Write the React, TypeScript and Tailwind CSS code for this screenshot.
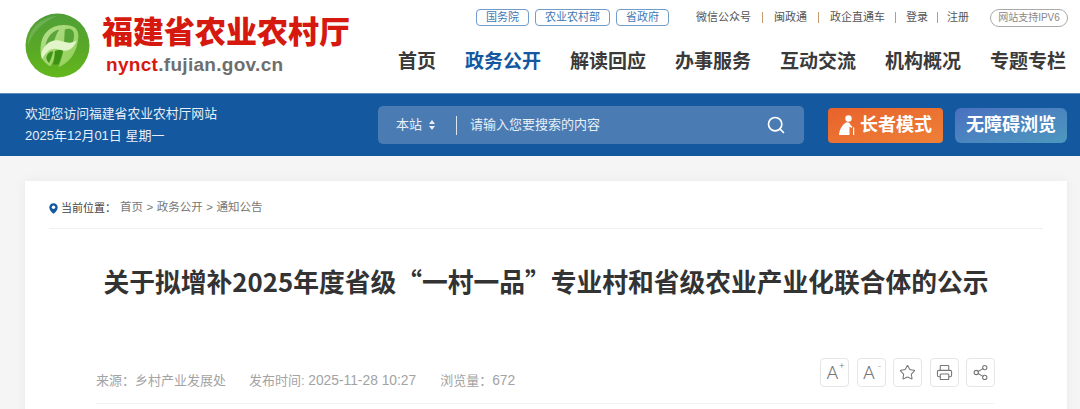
import { Search, Star, Printer, Share2 } from "lucide-react";

const font = { fontFamily: '"Liberation Sans", "Noto Sans CJK SC", sans-serif' };

function Logo() {
  return (
    <svg width="65" height="65" viewBox="0 0 66 66" className="shrink-0">
      <defs>
        <linearGradient id="lg" x1="0" y1="0" x2="0" y2="1">
          <stop offset="0" stopColor="#4f9f38" />
          <stop offset="0.55" stopColor="#5aa827" />
          <stop offset="1" stopColor="#63b81a" />
        </linearGradient>
        <linearGradient id="band" x1="0" y1="0" x2="1" y2="1">
          <stop offset="0" stopColor="#b5de90" />
          <stop offset="1" stopColor="#8fd052" />
        </linearGradient>
      </defs>
      <circle cx="33" cy="33" r="32.5" fill="url(#lg)" />
      <g transform="translate(4 4) scale(0.88)">
        <path d="M14 45C11 25 20 11 37 9.5C50 8.5 57.5 12 57 23C56 41 47 53 34 58C37 50 39 44 40 37L30 39C30 46 28 52 25 57C19 54 16 50 14 45Z" fill="url(#band)" />
        <path d="M19 37C19 26 25 17 35 14.5C32 19 30 24 29 29C25 30 22 33 19 37Z" fill="#5ba53a" />
        <path d="M41.5 14.5C47 12.5 52.5 14 52 22C51.8 26 51 29 49.5 31.5C46.5 32 44 31.5 40.5 29.5C41 24 41 19 41.5 14.5Z" fill="#58a335" />
        <path d="M20 47C21 42 24 40 28 39.5C27 45 25 49 23.5 53C22 52 20.5 50 20 47Z" fill="#3f9514" />
        <path d="M30 39.5L39.5 37C38.5 44 36.5 49 34 54.5C32 55 30 55 28 54.5C29.5 49 30 44 30 39.5Z" fill="#3c9012" />
        <path d="M14 43C17 31 27 25 36 27.5C43 29.5 49 31.5 55 27C52 37 44 41 36 38C28 35 21 37 15 49Z" fill="#e2f5c8" />
      </g>
      <path d="M3 33C3 16 16 4 33 3C20 8 8 18 3 33Z" fill="#ffffff" opacity="0.15" />
    </svg>
  );
}

function Elder() {
  return (
    <svg width="17" height="20" viewBox="0 0 17 20" fill="#fff" className="shrink-0">
      <circle cx="9.5" cy="3.5" r="3.2" />
      <path d="M7 7.5c2.5-.6 4 .6 4.5 2.2l2 2.3-1 1-2-1.6V20H0c.2-5 3-10 7-12.5Z" />
      <path d="M14 12.5h1.2V20H14z" />
    </svg>
  );
}

function Pin() {
  return (
    <svg width="9" height="11" viewBox="0 0 9 11" className="shrink-0">
      <path d="M4.5 0.3C2 0.3 0.3 2.1 0.3 4.4 0.3 7 3 9.4 4.5 10.7 6 9.4 8.7 7 8.7 4.4 8.7 2.1 7 0.3 4.5 0.3Z" fill="#14589f" />
      <circle cx="4.5" cy="4.3" r="1.7" fill="#fff" />
    </svg>
  );
}

function Pill({ children }: { children: string }) {
  return (
    <span className="h-[17px] px-[9px] flex items-center rounded-[4px] border border-[#6f9ccb] text-[11px] text-[#3f78b4] leading-none">
      {children}
    </span>
  );
}

function IconBox({ children }: { children: React.ReactNode }) {
  return (
    <span className="w-[29px] h-[29px] flex items-center justify-center rounded-[4px] border border-[#e6e6e6] text-[#777] leading-none">
      {children}
    </span>
  );
}

function FontA({ mark }: { mark: string }) {
  return (
    <span className="relative pr-[4px] font-['Roboto'] font-light text-[19px] leading-none">
      A
      <span className="absolute right-[-2px] top-[-1px] text-[9px] leading-none">{mark}</span>
    </span>
  );
}

export default function App() {
  return (
    <div style={font} className="w-[1080px] h-[409px] overflow-hidden bg-[#f5f5f5]">
      <header className="h-[93px] bg-white flex pl-[25px] pr-[12px]">
        <div className="flex items-start pt-[13px]">
          <Logo />
          <div className="ml-[12px] pt-[1px]">
            <div className="text-[31px] leading-[38px] font-black text-[#d6190e] whitespace-nowrap">福建省农业农村厅</div>
            <div className="ml-[4px] mt-[1px] text-[19px] leading-[24px] font-bold tracking-[0.3px] text-[#6e6e6e] whitespace-nowrap">
              <span className="text-[#d6190e]">nynct</span>.fujian.gov.cn
            </div>
          </div>
        </div>
        <div className="flex-1 flex flex-col items-end">
          <div className="flex items-center pt-[8px] h-[27px]">
            <div className="flex items-center gap-[6px]">
              <Pill>国务院</Pill>
              <Pill>农业农村部</Pill>
              <Pill>省政府</Pill>
            </div>
            <div className="ml-[27px] flex items-center text-[11px] text-[#555] whitespace-nowrap">
              <span>微信公众号</span>
              <span className="mx-[11px] w-px h-[11px] bg-[#c49a6c]" />
              <span>闽政通</span>
              <span className="mx-[11px] w-px h-[11px] bg-[#c49a6c]" />
              <span>政企直通车</span>
              <span className="mx-[10px] w-px h-[11px] bg-[#c49a6c]" />
              <span>登录</span>
              <span className="mx-[9px] w-px h-[11px] bg-[#c49a6c]" />
              <span>注册</span>
            </div>
            <span className="ml-[21px] h-[18px] w-[78px] flex items-center justify-center rounded-full border border-[#aaa] text-[10px] text-[#888] whitespace-nowrap">网站支持IPV6</span>
          </div>
          <nav className="mt-[23px] mr-[2px] flex gap-[29px] text-[19px] leading-[24px] font-bold text-[#3a3a3a] whitespace-nowrap">
            <span>首页</span>
            <span className="text-[#14589f]">政务公开</span>
            <span>解读回应</span>
            <span>办事服务</span>
            <span>互动交流</span>
            <span>机构概况</span>
            <span>专题专栏</span>
          </nav>
        </div>
      </header>

      <div className="h-[63px] bg-[#14589f] border-t border-[#5b8bc0] flex items-center pl-[25px] pr-[13px] text-white">
        <div className="w-[353px] text-[12.8px] leading-[22px] text-[#e8eff7] whitespace-nowrap">
          <div>欢迎您访问福建省农业农村厅网站</div>
          <div className="text-[13px]">2025年12月01日 星期一</div>
        </div>
        <div className="w-[426px] h-[38px] rounded-[5px] bg-[#4a7cb3] flex items-center pl-[18px] pr-[18px] text-[13px] text-[#e8eff7]">
          <span>本站</span>
          <span className="ml-[7px] flex flex-col gap-[2px]">
            <span className="w-0 h-0 border-x-[3px] border-x-transparent border-b-[4px] border-b-[#e8eff7]" />
            <span className="w-0 h-0 border-x-[3px] border-x-transparent border-t-[4px] border-t-[#e8eff7]" />
          </span>
          <span className="ml-[21px] w-px h-[19px] bg-[#dbe6f2]" />
          <span className="ml-[13px] flex-1">请输入您要搜索的内容</span>
          <Search size={20} strokeWidth={2} className="text-white" />
        </div>
        <div className="ml-[24px] w-[115px] h-[35px] rounded-[4px] bg-gradient-to-br from-[#e8622c] to-[#ee8038] flex items-center justify-center gap-[4px] text-[18px] font-bold whitespace-nowrap">
          <Elder />
          <span>长者模式</span>
        </div>
        <div className="ml-[12px] w-[112px] h-[35px] rounded-[6px] bg-gradient-to-br from-[#4a70c0] to-[#4d98be] flex items-center justify-center text-[18px] font-bold whitespace-nowrap">
          无障碍浏览
        </div>
      </div>

      <main className="mt-[25px] ml-[25px] mr-[13px] h-[300px] bg-white shadow-[0_0_12px_rgba(0,0,0,0.05)] px-[24px]">
        <div className="h-[48px] border-b border-[#f0f0f0] flex items-center pt-[7px] text-[11.5px] text-[#777] whitespace-nowrap">
          <Pin />
          <span className="ml-[3px] text-[#444] text-[11px]">当前位置：</span>
          <span className="ml-[4px]">首页</span>
          <span className="mx-[3.5px]">&gt;</span>
          <span>政务公开</span>
          <span className="mx-[3.5px]">&gt;</span>
          <span>通知公告</span>
        </div>
        <h1 className="mt-[34px] text-center font-['Noto_Sans_CJK_SC'] text-[25.75px] leading-[36px] font-bold text-[#333] whitespace-nowrap">
          关于拟增补2025年度省级“一村一品”专业村和省级农业产业化联合体的公示
        </h1>
        <div className="mt-[59px] ml-[47px] mr-[48px] h-[46px] border-b border-[#f3f3f3] flex items-start justify-between">
          <div className="pt-[11px] flex text-[13px] leading-[24px] text-[#a3a3a3] whitespace-nowrap">
            <span>来源：乡村产业发展处</span>
            <span className="ml-[23px]">发布时间: <span className="text-[13.8px]">2025-11-28 10:27</span></span>
            <span className="ml-[24px]">浏览量：<span className="text-[13.8px]">672</span></span>
          </div>
          <div className="flex gap-[7.5px]">
            <IconBox><FontA mark="+" /></IconBox>
            <IconBox><FontA mark="-" /></IconBox>
            <IconBox><Star size={17} strokeWidth={1.5} /></IconBox>
            <IconBox><Printer size={17} strokeWidth={1.5} /></IconBox>
            <IconBox><Share2 size={17} strokeWidth={1.5} /></IconBox>
          </div>
        </div>
      </main>
    </div>
  );
}
